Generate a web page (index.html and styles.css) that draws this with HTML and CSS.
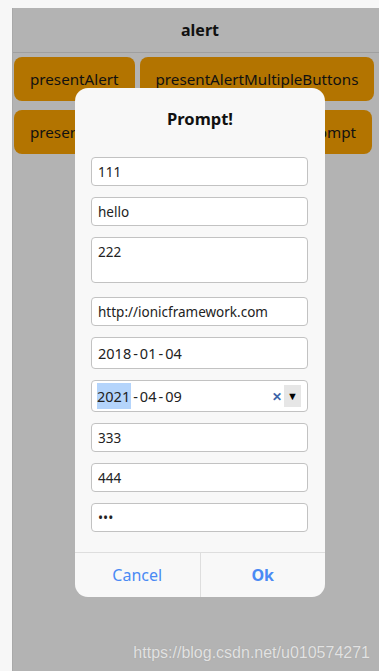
FILE: index.html
```html
<!DOCTYPE html>
<html lang="en">
  <head>
    <meta charset="UTF-8" />
    <meta name="viewport" content="width=device-width, initial-scale=1.0" />
    <title>alert</title>
    <link rel="stylesheet" href="styles.css">
  </head>
  <body>
    <div id="app-frame">
      <div class="toolbar">alert</div>
      <div class="button-row">
        <button class="btn">presentAlert</button>
        <button class="btn">presentAlertMultipleButtons</button>
      </div>
      <div class="button-row spread">
        <button class="btn">presentAlertRadio</button>
        <button class="btn">presentAlertPrompt</button>
      </div>
      <div class="watermark">https://blog.csdn.net/u010574271</div>

      <div class="alert-box">
        <div class="alert-title">Prompt!</div>
        <div class="alert-inputs">
          <input class="field" type="text" value="111" />
          <input class="field" type="text" value="hello" />
          <textarea class="field area">222</textarea>
          <input class="field" type="text" value="http://ionicframework.com" />
          <div class="field date">2018<span class="dash">-</span>01<span class="dash">-</span>04</div>
          <div class="field date">
            <span class="sel">2021</span><span class="dash">-</span>04<span class="dash">-</span>09
            <span class="date-tools">
              <span class="clear">✕</span>
              <span class="drop">▼</span>
            </span>
          </div>
          <input class="field" type="text" value="333" />
          <input class="field" type="text" value="444" />
          <input class="field" type="password" value="abc" />
        </div>
        <div class="alert-buttons">
          <button class="alert-btn">Cancel</button>
          <button class="alert-btn ok">Ok</button>
        </div>
      </div>
    </div>
  </body>
</html>
```

FILE: styles.css
```css
body {
  margin: 0;
  background-color: #f7f7f7;
  font-family: "Noto Sans", "Open Sans", sans-serif;
  height: 671px;
  overflow: hidden;
}

#app-frame {
  position: relative;
  margin: 8px 0 0 12px;
  height: 663px;
  background-color: #b3b3b3;
  border-left: 1px solid #a9a9a9;
}

.toolbar {
  height: 44px;
  line-height: 44px;
  text-align: center;
  font-size: 16px;
  font-weight: bold;
  color: #111;
  border-bottom: 1px solid #9f9f9f;
  padding-left: 8px;
}

.button-row {
  display: flex;
  gap: 5px;
  padding: 4px 7px 0 1px;
  margin-bottom: 5px;
}

.button-row.spread {
  justify-content: space-between;
}

.btn {
  height: 44px;
  padding: 0 16px;
  border: none;
  border-radius: 8px;
  background-color: #b37400;
  color: #111;
  font-family: "Noto Sans", "Open Sans", sans-serif;
  font-size: 15.2px;
}

.watermark {
  position: absolute;
  right: 9px;
  bottom: 9px;
  font-family: "Liberation Sans", Arial, sans-serif;
  font-size: 16px;
  color: #e2e2e2;
  text-shadow: 0 0 1px #999;
}

.alert-box {
  position: absolute;
  left: 62px;
  top: 80px;
  width: 250px;
  height: 509px;
  background-color: #f8f8f8;
  border-radius: 13px;
  display: flex;
  flex-direction: column;
  overflow: hidden;
}

.alert-title {
  text-align: center;
  font-size: 16.5px;
  font-weight: bold;
  color: #111;
  padding-top: 19px;
  height: 50px;
  box-sizing: border-box;
}

.alert-inputs {
  flex: 1;
  display: flex;
  flex-direction: column;
  gap: 11px;
  padding: 19px 17px 0 16px;
}

.field {
  box-sizing: border-box;
  width: 217px;
  height: 29px;
  margin: 0;
  padding: 0 6px;
  border: 1px solid #c2c2c2;
  border-radius: 4px;
  background-color: #fff;
  font-family: "Noto Sans", "Open Sans", sans-serif;
  font-size: 13.5px;
  color: #222;
  outline: none;
}

.field.area {
  height: 46px;
  padding-top: 5px;
  resize: none;
  margin-bottom: 3px;
}

.field.date {
  height: 32px;
  display: flex;
  align-items: center;
  font-size: 14.5px;
}

.dash {
  margin: 0 2px;
}

.sel {
  background-color: #b4d4fb;
  padding: 3px 1px 3px 0;
  margin-left: -1px;
}

.date-tools {
  margin-left: auto;
  display: flex;
  align-items: center;
  gap: 2px;
}

.clear {
  color: #3b64a8;
  font-weight: bold;
  font-size: 12px;
}

.drop {
  background-color: #e6e6e6;
  font-size: 11px;
  width: 17px;
  height: 22px;
  line-height: 22px;
  text-align: center;
  color: #000;
}

.alert-buttons {
  display: flex;
  height: 44px;
  border-top: 1px solid #dedede;
}

.alert-btn {
  flex: 1;
  border: none;
  background: none;
  color: #4a8af4;
  font-family: "Noto Sans", "Open Sans", sans-serif;
  font-size: 16px;
  padding: 0;
}

.alert-btn.ok {
  font-weight: bold;
  border-left: 1px solid #dedede;
}
```
